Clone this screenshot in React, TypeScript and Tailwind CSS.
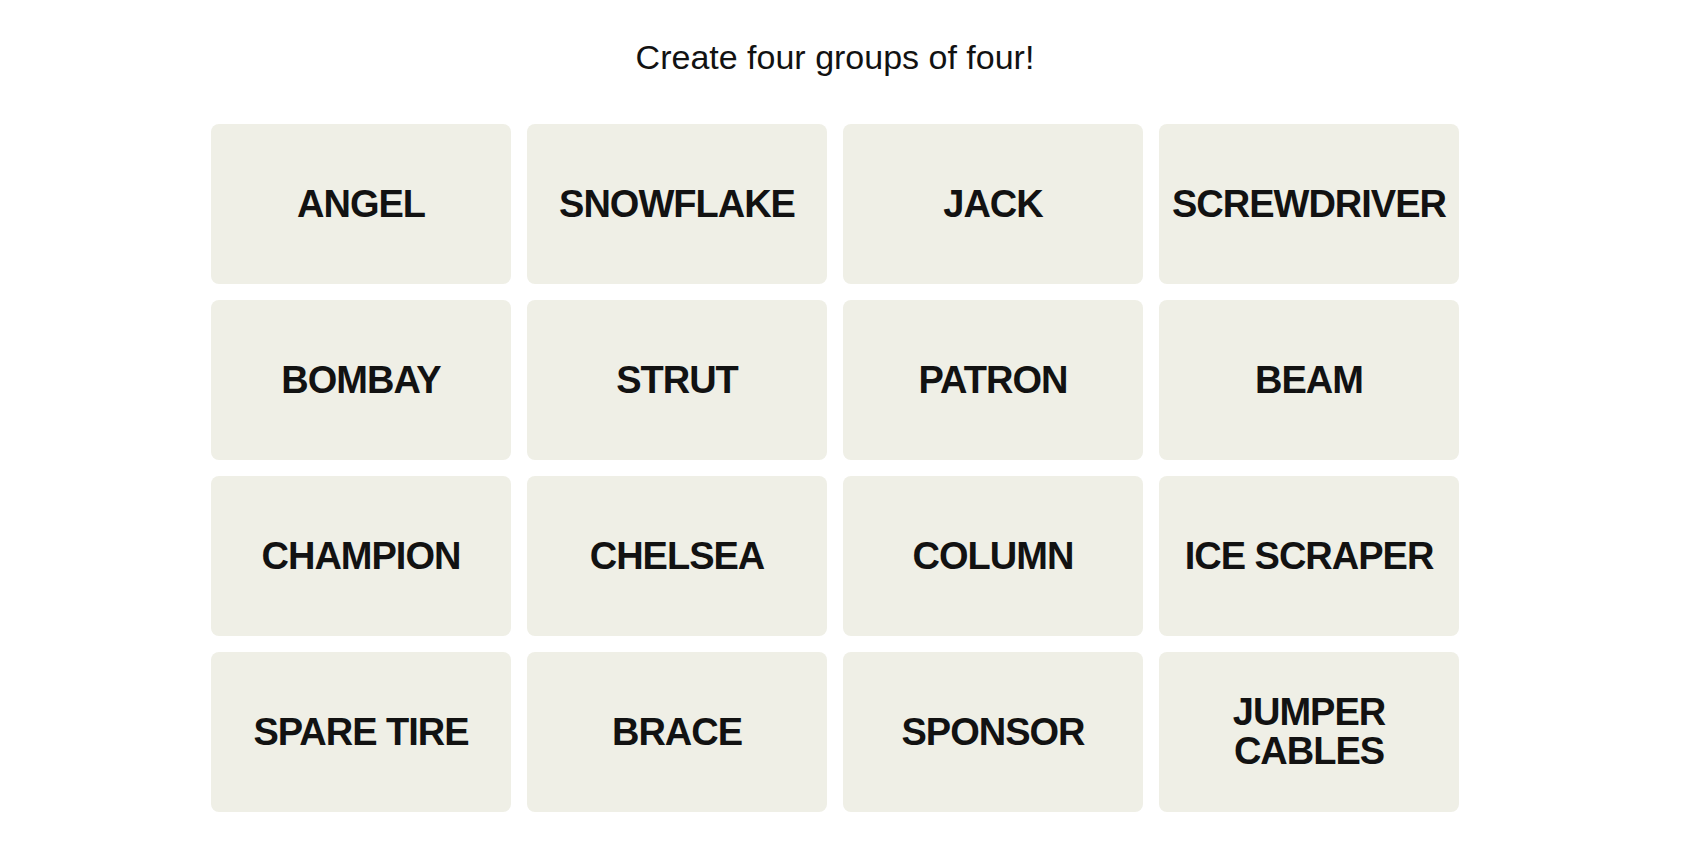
import React from "react";

const words: string[] = [
  "ANGEL",
  "SNOWFLAKE",
  "JACK",
  "SCREWDRIVER",
  "BOMBAY",
  "STRUT",
  "PATRON",
  "BEAM",
  "CHAMPION",
  "CHELSEA",
  "COLUMN",
  "ICE SCRAPER",
  "SPARE TIRE",
  "BRACE",
  "SPONSOR",
  "JUMPER CABLES",
];

export default function App() {
  return (
    <div
      className="min-h-[842px] w-full bg-white pr-[22px] text-black"
      style={{ fontFamily: '"Liberation Sans", Arial, sans-serif' }}
    >
      <div className="mx-auto flex w-[1248px] flex-col items-center pt-[37px]">
        <p className="h-[40px] text-[34px] leading-[40px] font-normal text-[#121212]">
          Create four groups of four!
        </p>
        <div className="mt-[47px] grid w-[1248px] grid-cols-4 gap-[16px]">
          {words.map((w) => (
            <div
              key={w}
              className="flex h-[160px] w-[300px] items-center justify-center rounded-[8px] bg-[#efefe6]"
            >
              <span className="text-center text-[38px] leading-[39px] font-bold tracking-[-1px] whitespace-nowrap text-[#121212] uppercase">
                {w === "JUMPER CABLES" ? (
                  <>
                    JUMPER
                    <br />
                    CABLES
                  </>
                ) : (
                  w
                )}
              </span>
            </div>
          ))}
        </div>
      </div>
    </div>
  );
}
